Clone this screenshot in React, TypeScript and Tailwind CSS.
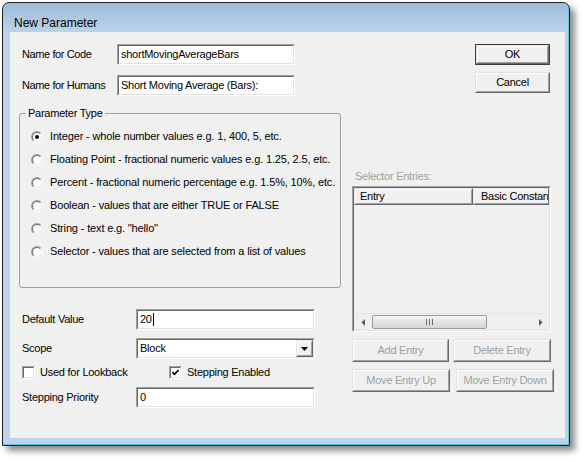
import React from "react";

type BoxProps = { className?: string; innerClassName?: string; children?: React.ReactNode };

function Sunken({ className = "", innerClassName = "", children }: BoxProps) {
  return (
    <div className={`border border-t-[#a0a0a0] border-l-[#a0a0a0] border-b-white border-r-white ${className}`}>
      <div className={`w-full h-full border border-t-[#696969] border-l-[#696969] border-b-[#e3e3e3] border-r-[#e3e3e3] ${innerClassName}`}>
        {children}
      </div>
    </div>
  );
}

function Raised({ className = "", innerClassName = "", children }: BoxProps) {
  return (
    <div className={`border border-t-[#e3e3e3] border-l-[#e3e3e3] border-b-[#696969] border-r-[#696969] bg-[#f0f0f0] ${className}`}>
      <div className={`w-full h-full border border-t-white border-l-white border-b-[#a0a0a0] border-r-[#a0a0a0] flex items-center ${innerClassName}`}>
        {children}
      </div>
    </div>
  );
}

function Radio({ checked }: { checked?: boolean }) {
  return (
    <div className="w-[12px] h-[12px] rounded-full border border-t-[#a0a0a0] border-l-[#a0a0a0] border-b-white border-r-white">
      <div className="w-full h-full rounded-full border border-t-[#696969] border-l-[#696969] border-b-[#e3e3e3] border-r-[#e3e3e3] bg-white flex items-center justify-center">
        {checked ? <div className="w-[4px] h-[4px] rounded-full bg-black" /> : null}
      </div>
    </div>
  );
}

function Checkbox({ checked }: { checked?: boolean }) {
  return (
    <Sunken className="w-[13px] h-[13px] bg-white" innerClassName="flex items-center justify-center">
      {checked ? (
        <svg width="9" height="9" viewBox="0 0 9 9">
          <path d="M1.5 4.2 L3.5 6.3 L7.6 2.2" fill="none" stroke="#000" strokeWidth="1.7" />
        </svg>
      ) : null}
    </Sunken>
  );
}

const radios = [
  "Integer - whole number values e.g. 1, 400, 5, etc.",
  "Floating Point - fractional numeric values e.g. 1.25, 2.5, etc.",
  "Percent - fractional numeric percentage e.g. 1.5%, 10%, etc.",
  "Boolean - values that are either TRUE or FALSE",
  'String - text e.g. "hello"',
  "Selector - values that are selected from a list of values",
];

function LeftCol() {
  return (
    <div className="w-[331px] pl-[12px] pt-[12px] flex flex-col">
      <div className="flex items-center h-[21px]">
        <span className="w-[95px] tracking-[-0.4px]">Name for Code</span>
        <Sunken className="w-[178px] h-[21px] bg-white" innerClassName="pl-[2px] flex items-center">
          shortMovingAverageBars
        </Sunken>
      </div>
      <div className="flex items-center h-[21px] mt-[10px]">
        <span className="w-[95px] tracking-[-0.4px]">Name for Humans</span>
        <Sunken className="w-[178px] h-[21px] bg-white" innerClassName="pl-[2px] flex items-center">
          Short Moving Average (Bars):
        </Sunken>
      </div>

      <div className="-ml-[3px] mt-[17px] w-[322px] h-[175px] border border-[#a0a0a0] rounded-[3px] flex flex-col">
        <span className="-mt-[7px] ml-[6px] px-[2px] bg-[#f0f0f0] self-start leading-[13px]">Parameter Type</span>
        <div className="mt-[5px] flex flex-col">
          {radios.map((r, i) => (
            <div key={r} className="h-[23px] flex items-center pl-[11px]">
              <Radio checked={i === 0} />
              <span className="ml-[7px] whitespace-nowrap tracking-[-0.15px]">{r}</span>
            </div>
          ))}
        </div>
      </div>

      <div className="flex items-center h-[21px] mt-[21px]">
        <span className="w-[114px]">Default Value</span>
        <Sunken className="w-[179px] h-[21px] bg-white" innerClassName="pl-[2px] flex items-center">
          <span>20</span>
          <span className="inline-block w-[1px] h-[13px] bg-black ml-[1px]" />
        </Sunken>
      </div>
      <div className="flex items-center h-[21px] mt-[8px]">
        <span className="w-[114px]">Scope</span>
        <Sunken className="w-[179px] h-[21px] bg-white" innerClassName="pl-[2px] flex items-center">
          <span>Block</span>
          <Raised className="ml-auto w-[17px] h-[17px]" innerClassName="justify-center">
            <svg width="7" height="4" viewBox="0 0 7 4">
              <polygon points="0,0 7,0 3.5,4" fill="#000" />
            </svg>
          </Raised>
        </Sunken>
      </div>
      <div className="flex items-center h-[13px] mt-[7px]">
        <div className="w-[147px] flex items-center">
          <Checkbox />
          <span className="ml-[5px] whitespace-nowrap">Used for Lookback</span>
        </div>
        <Checkbox checked />
        <span className="ml-[5px] whitespace-nowrap">Stepping Enabled</span>
      </div>
      <div className="flex items-center h-[21px] mt-[8px]">
        <span className="w-[114px]">Stepping Priority</span>
        <Sunken className="w-[179px] h-[21px] bg-white" innerClassName="pl-[2px] flex items-center">
          0
        </Sunken>
      </div>
    </div>
  );
}

function RightCol() {
  return (
    <div className="ml-[11px] w-[202px] pt-[12px] flex flex-col">
      <div className="ml-[123px] w-[75px] h-[21px] border border-[#3c3c3c]">
        <Raised className="w-full h-full" innerClassName="justify-center">OK</Raised>
      </div>
      <Raised className="ml-[123px] mt-[7px] w-[75px] h-[21px]" innerClassName="justify-center">
        Cancel
      </Raised>

      <span className="mt-[77px] ml-[3px] h-[13px] text-[#a0a0a0]">Selector Entries:</span>

      <Sunken className="mt-[3px] w-[199px] h-[146px] bg-[#f0f0f0]" innerClassName="flex flex-col">
        <div className="h-[17px] flex">
          <Raised className="w-[119px] h-full" innerClassName="pl-[4px]">
            Entry
          </Raised>
          <Raised className="flex-1 min-w-0 h-full overflow-hidden" innerClassName="pl-[6px] whitespace-nowrap overflow-hidden border-r-0">
            Basic Constant
          </Raised>
        </div>
        <div className="mt-auto h-[17px] flex items-center bg-[#efefef] border-t border-[#e6e6e6]">
          <div className="w-[17px] h-full flex items-center justify-center">
            <svg width="4" height="7" viewBox="0 0 4 7">
              <polygon points="4,0 4,7 0.5,3.5" fill="#5a5a5a" />
            </svg>
          </div>
          <div className="ml-[1px] w-[115px] h-[14px] rounded-[2px] border border-[#9a9a9a] bg-[linear-gradient(to_bottom,#f6f6f6,#e4e4e4_50%,#d6d6d6)] flex items-center justify-center gap-[2px]">
            <div className="w-[1px] h-[6px] bg-[#6a6a6a]" />
            <div className="w-[1px] h-[6px] bg-[#6a6a6a]" />
            <div className="w-[1px] h-[6px] bg-[#6a6a6a]" />
          </div>
          <div className="flex-1" />
          <div className="w-[17px] h-full flex items-center justify-center">
            <svg width="4" height="7" viewBox="0 0 4 7">
              <polygon points="0,0 0,7 3.5,3.5" fill="#5a5a5a" />
            </svg>
          </div>
        </div>
      </Sunken>

      <div className="mt-[7px] flex h-[23px]">
        <Raised className="w-[97px] h-full text-[#a0a0a0]" innerClassName="justify-center">Add Entry</Raised>
        <Raised className="ml-[4px] w-[98px] h-full text-[#a0a0a0]" innerClassName="justify-center">Delete Entry</Raised>
      </div>
      <div className="mt-[7px] flex h-[23px]">
        <Raised className="w-[98px] h-full text-[#a0a0a0]" innerClassName="justify-center">Move Entry Up</Raised>
        <Raised className="ml-[6px] w-[98px] h-full text-[#a0a0a0]" innerClassName="justify-center">Move Entry Down</Raised>
      </div>
    </div>
  );
}

export default function App() {
  return (
    <div className="w-[584px] h-[462px] bg-white pl-[2px] pt-[2px] font-['Liberation_Sans',Arial,sans-serif] text-[11px] leading-[13px] tracking-[-0.25px] text-black">
      <div className="w-[568px] h-[444px] rounded-t-[7px] border border-[#202020] bg-[linear-gradient(to_bottom,#9ebbd8_0px,#bcd3eb_30px,#bcd3eb_100%)] shadow-[inset_-1px_-1px_0_#5fc6dc,5px_5px_6px_rgba(0,0,0,0.45)] flex flex-col">
        <div className="h-[29px] pl-[11px] pt-[13px] text-[12px] leading-[14px] tracking-[0px]">New Parameter</div>
        <div className="ml-[7px] mr-[4px] h-[406px] bg-[#f0f0f0] flex">
          <LeftCol />
          <RightCol />
        </div>
      </div>
    </div>
  );
}
